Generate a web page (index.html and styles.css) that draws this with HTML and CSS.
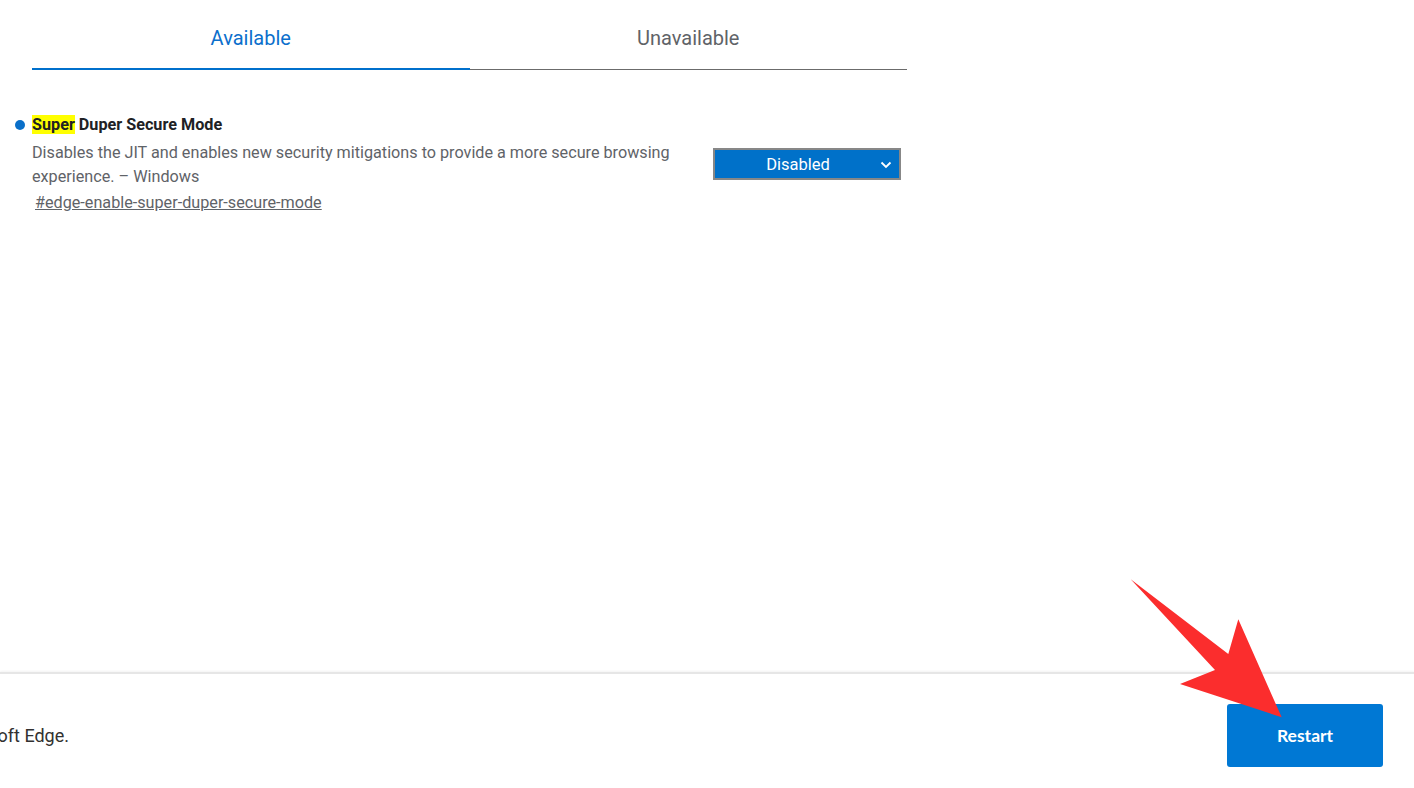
FILE: index.html
```html
<!DOCTYPE html>
<html lang="en">
<head>
<meta charset="utf-8">
<title>Experiments</title>
<link rel="stylesheet" href="styles.css">
</head>
<body>
<div class="page">
  <main class="content">
    <div class="tabs">
      <div class="tab tab-active">Available</div>
      <div class="tab">Unavailable</div>
    </div>
    <div class="experiment">
      <div class="exp-text">
        <div class="exp-title"><span class="dot"></span><span><mark class="hl">Super</mark> Duper Secure Mode</span></div>
        <p class="exp-desc">Disables the JIT and enables new security mitigations to provide a more secure browsing experience. – Windows</p>
        <a class="exp-link" href="#edge-enable-super-duper-secure-mode">#edge-enable-super-duper-secure-mode</a>
      </div>
      <div class="select">
        <span class="select-label">Disabled</span>
        <svg class="chev" width="12" height="8" viewBox="0 0 12 8"><path d="M1.5 1.5 L6 6 L10.5 1.5" fill="none" stroke="#fff" stroke-width="1.8"/></svg>
      </div>
    </div>
  </main>
  <footer class="footer">
    <div class="footer-msg"><span>Your changes will take effect the next time you restart Microsoft Edge.</span></div>
    <button class="restart">Restart</button>
  </footer>
</div>
<svg class="arrow" width="1414" height="788" viewBox="0 0 1414 788">
  <polygon points="1130.7,579.3 1228.3,654 1238.3,619.3 1281.7,717.3 1180,684 1215,670" fill="#fb2d2d"/>
</svg>
</body>
</html>
```
FILE: styles.css
```css
html, body {
  margin: 0;
  padding: 0;
  background: #fff;
}
body {
  font-family: Roboto, "Liberation Sans", sans-serif;
  overflow: hidden;
}
.page {
  height: 788px;
  display: flex;
  flex-direction: column;
}
.content {
  flex: 1;
  width: 875px;
  margin-left: 32px;
}
.tabs {
  display: flex;
}
.tab {
  flex: 1;
  height: 70px;
  box-sizing: border-box;
  text-align: center;
  font-size: 20px;
  line-height: 24px;
  padding-top: 26px;
  color: #5f6368;
  border-bottom: 1px solid #6b6b6b;
}
.tab-active {
  color: #0c6fcc;
  border-bottom: 2px solid #0070cc;
}
.experiment {
  display: flex;
  align-items: center;
  justify-content: space-between;
  margin-top: 45px;
  padding-right: 6px;
}
.exp-text {
  width: 670px;
}
.exp-title {
  display: flex;
  align-items: center;
  margin-left: -17px;
  font-size: 16.2px;
  line-height: 20px;
  font-weight: 700;
  color: #202124;
}
.dot {
  width: 10px;
  height: 10px;
  border-radius: 50%;
  background: #0a6fc9;
  margin-right: 7px;
}
.hl {
  background: #ffff00;
  color: #202124;
}
.exp-desc {
  margin: 6px 0 0;
  font-size: 16.2px;
  line-height: 23.5px;
  color: #5f6368;
}
.exp-link {
  display: inline-block;
  margin: 5px 0 0 3px;
  font-size: 16.2px;
  line-height: 20px;
  color: #5f6368;
  text-decoration: underline;
}
.select {
  width: 188px;
  height: 32px;
  box-sizing: border-box;
  border: 2px solid #878787;
  background: #0071c9;
  display: flex;
  align-items: center;
  justify-content: center;
  padding-right: 18px;
  position: relative;
  color: #fff;
  font-size: 16.5px;
}
.chev {
  position: absolute;
  right: 7px;
  top: 11px;
}
.footer {
  height: 116px;
  box-sizing: border-box;
  border-top: 2px solid #e6e6e6;
  box-shadow: 0 -1px 2px rgba(0,0,0,0.05);
  display: flex;
  justify-content: space-between;
  align-items: flex-start;
  padding: 30px 31px 0 0;
}
.footer-msg {
  width: 69px;
  overflow: hidden;
  display: flex;
  justify-content: flex-end;
  white-space: nowrap;
  font-size: 18px;
  line-height: 24px;
  color: #323130;
  margin-top: 20px;
}
.restart {
  width: 156px;
  height: 63px;
  border: none;
  border-radius: 3px;
  background: #0078d4;
  color: #fff;
  font-family: Lato, "Liberation Sans", sans-serif;
  font-weight: 700;
  font-size: 17.5px;
  padding: 0;
}
.arrow {
  position: absolute;
  left: 0;
  top: 0;
  pointer-events: none;
}
```
